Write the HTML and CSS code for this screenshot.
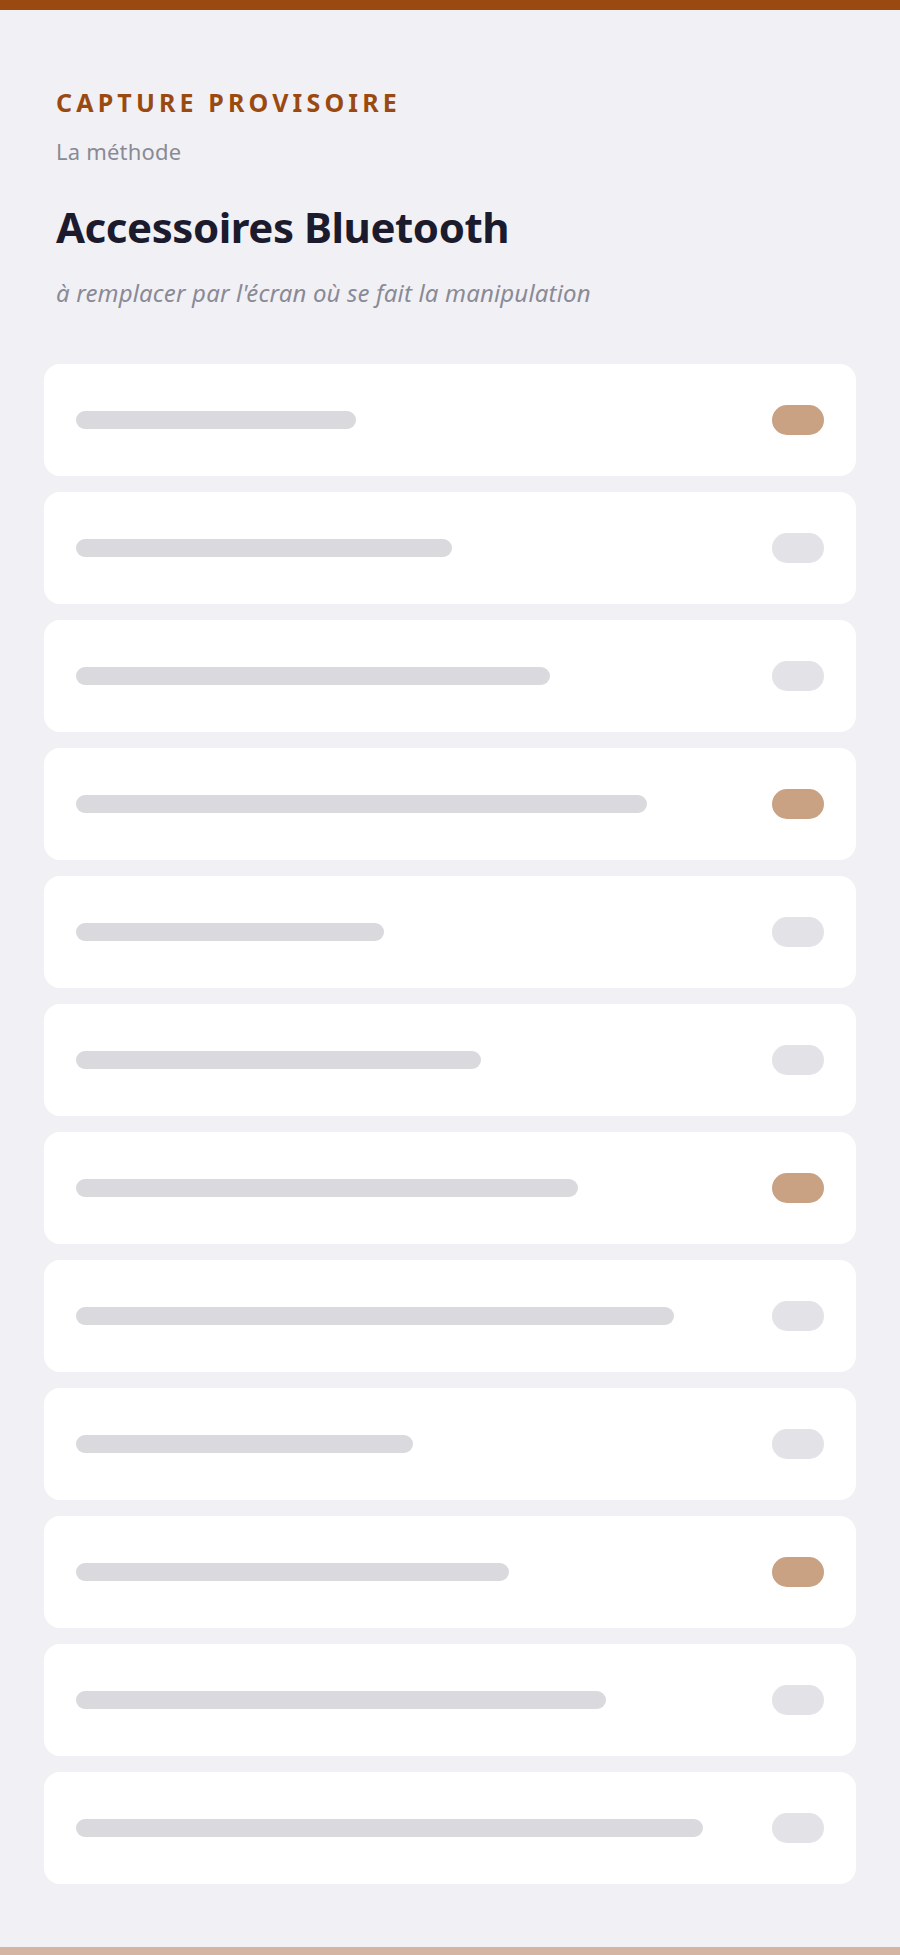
FILE: index.html
```html
<!DOCTYPE html>
<html lang="fr">
<head>
  <meta charset="UTF-8" />
  <meta name="viewport" content="width=device-width, initial-scale=1.0" />
  <title>Accessoires Bluetooth</title>
  <link rel="stylesheet" href="styles.css">
</head>
<body>

<div class="topbar"></div>

<div class="page">
  <header class="header">
    <div class="kicker">CAPTURE PROVISOIRE</div>
    <div class="method">La méthode</div>
    <h1 class="title">Accessoires Bluetooth</h1>
    <p class="note">à remplacer par l'écran où se fait la manipulation</p>
  </header>

  <div class="list">
    <div class="row"><div class="line" style="width: 280px"></div><div class="toggle on"></div></div>
    <div class="row"><div class="line" style="width: 376px"></div><div class="toggle"></div></div>
    <div class="row"><div class="line" style="width: 474px"></div><div class="toggle"></div></div>
    <div class="row"><div class="line" style="width: 571px"></div><div class="toggle on"></div></div>
    <div class="row"><div class="line" style="width: 308px"></div><div class="toggle"></div></div>
    <div class="row"><div class="line" style="width: 405px"></div><div class="toggle"></div></div>
    <div class="row"><div class="line" style="width: 502px"></div><div class="toggle on"></div></div>
    <div class="row"><div class="line" style="width: 598px"></div><div class="toggle"></div></div>
    <div class="row"><div class="line" style="width: 337px"></div><div class="toggle"></div></div>
    <div class="row"><div class="line" style="width: 433px"></div><div class="toggle on"></div></div>
    <div class="row"><div class="line" style="width: 530px"></div><div class="toggle"></div></div>
    <div class="row"><div class="line" style="width: 627px"></div><div class="toggle"></div></div>
  </div>
</div>

<div class="bottombar"></div>

</body>
</html>
```

FILE: styles.css
```css
html, body {
  margin: 0;
  padding: 0;
  background: #f1f1f5;
  font-family: "Noto Sans", "Open Sans", sans-serif;
}
.topbar {
  height: 10px;
  background: #9a4a10;
}
.bottombar {
  height: 8px;
  background: #d4b5a3;
}
.page {
  padding: 0 44px 63px;
}
.header {
  padding: 76px 12px 55px;
}
.kicker {
  font-size: 25px;
  line-height: 32px;
  font-weight: 700;
  letter-spacing: 4.15px;
  color: #9a4a10;
}
.method {
  margin-top: 19px;
  font-size: 22px;
  line-height: 28px;
  letter-spacing: 0.2px;
  color: #8a8a96;
}
.title {
  margin: 36px 0 0;
  font-size: 42px;
  line-height: 52px;
  font-weight: 700;
  letter-spacing: -0.45px;
  color: #1c1b2e;
}
.note {
  margin: 24px 0 0;
  font-size: 24px;
  line-height: 32px;
  letter-spacing: 0.15px;
  font-style: italic;
  color: #8a8a96;
}
.list {
  display: flex;
  flex-direction: column;
  gap: 16px;
}
.row {
  height: 112px;
  padding: 0 32px;
  background: #fff;
  border-radius: 16px;
  display: flex;
  align-items: center;
  justify-content: space-between;
  box-sizing: border-box;
}
.line {
  height: 18px;
  border-radius: 9px;
  background: #d9d9de;
}
.toggle {
  width: 52px;
  height: 30px;
  border-radius: 15px;
  background: #e2e2e7;
}
.toggle.on {
  background: #c9a183;
}
```
